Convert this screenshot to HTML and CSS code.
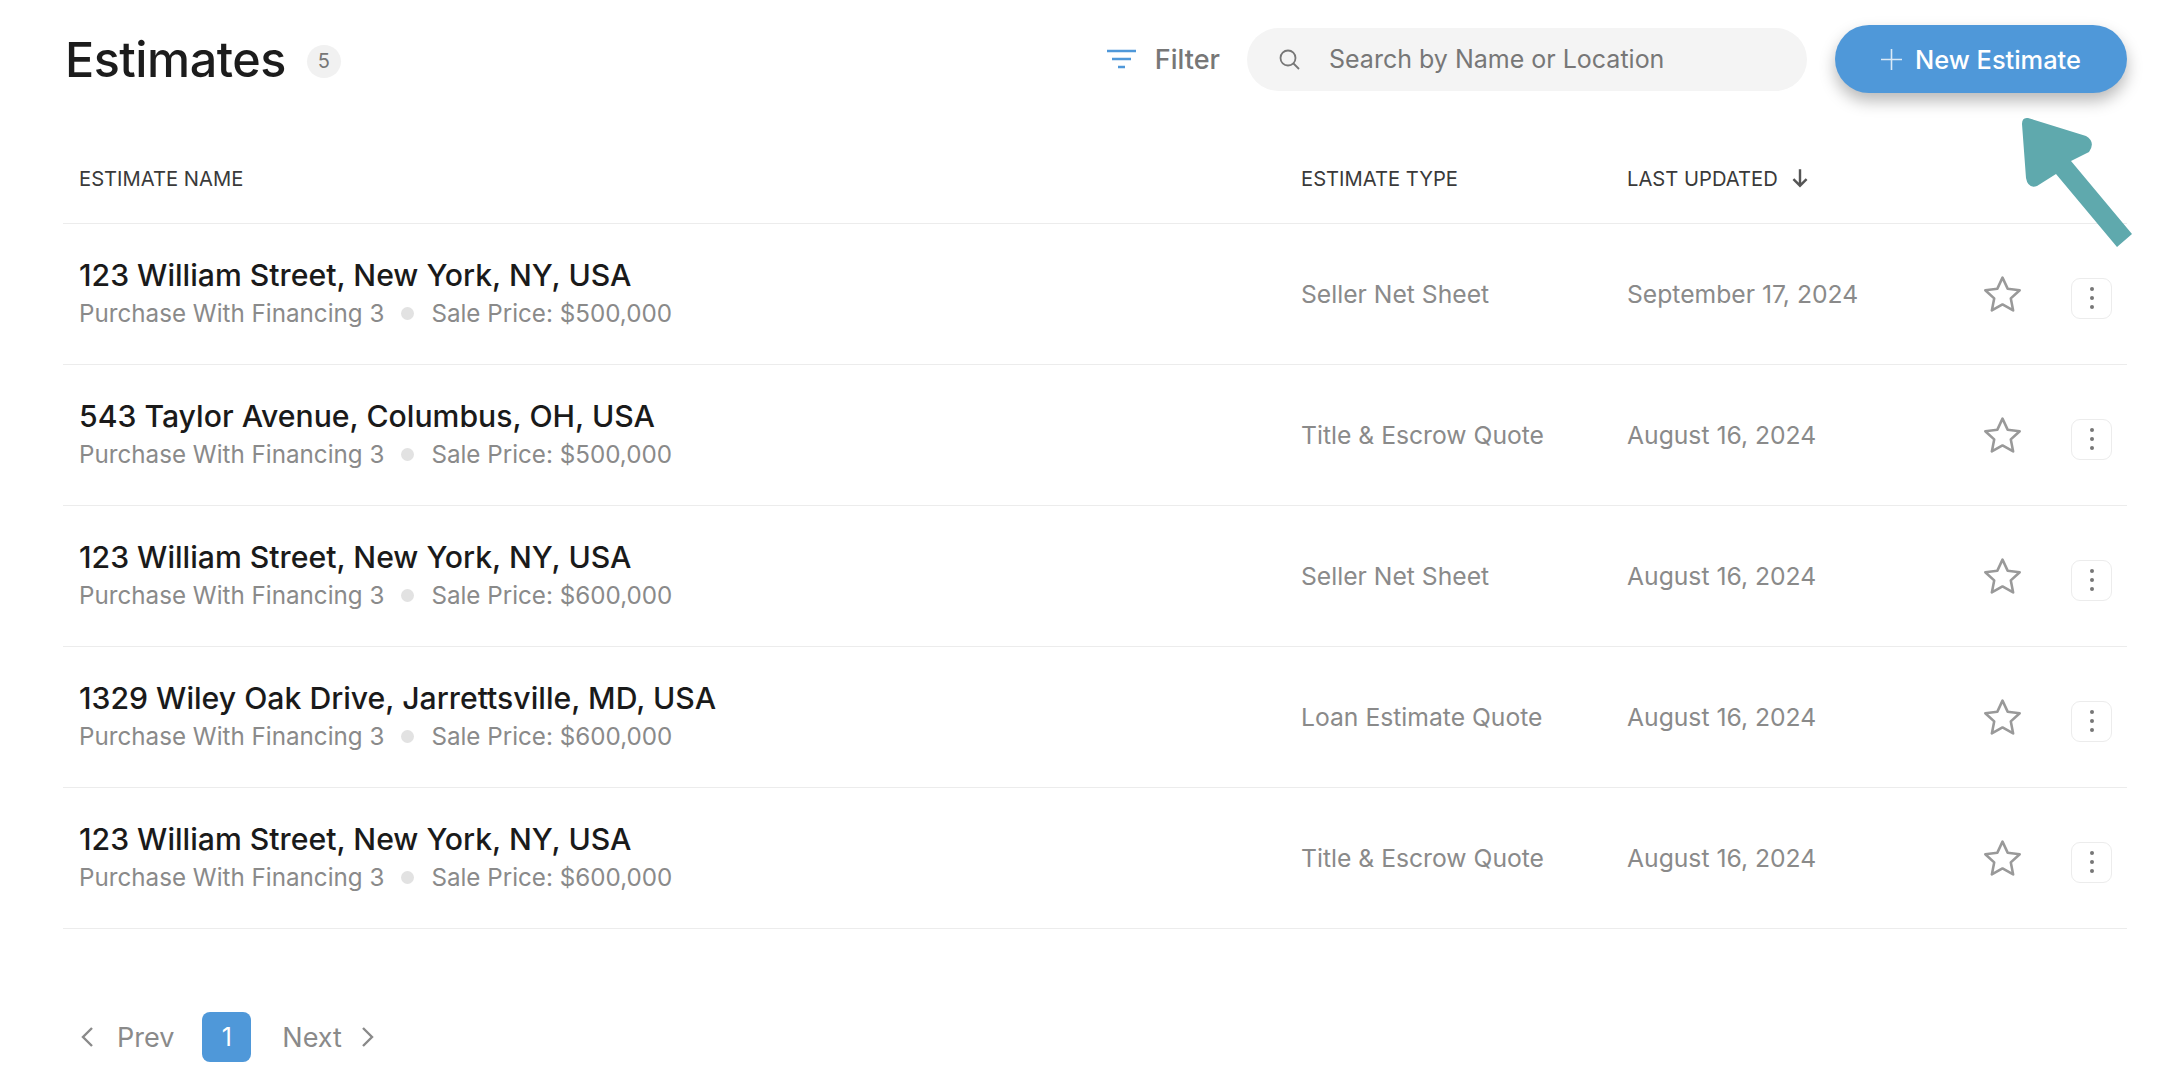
FILE: index.html
```html
<!DOCTYPE html>
<html>
<head>
	<meta charset="utf-8">
	<title>Estimates</title>
	<link rel="stylesheet" href="styles.css">
</head>
<body>
	<div class="page">
		<header class="toolbar">
			<h1 class="title">Estimates</h1>
			<span class="count">5</span>
			<button class="filter">
				<svg class="filter-icon" viewBox="0 0 31 20"><path d="M1 2h29M6 10h19M12 18h7"/></svg>
				Filter
			</button>
			<label class="search">
				<svg class="search-icon" viewBox="0 0 24 24"><circle cx="11" cy="11" r="7.5"/><path d="M16.5 16.5L22 22"/></svg>
				<input class="search-input" type="text" placeholder="Search by Name or Location">
			</label>
			<button class="new-btn"><svg class="plus" viewBox="0 0 21 21"><path d="M10.500 0v21M0 10.500h21"/></svg>New Estimate</button>
		</header>

		<div class="row head">
			<div>ESTIMATE NAME</div>
			<div>ESTIMATE TYPE</div>
			<div class="sorted">LAST UPDATED
				<svg class="sort-icon" viewBox="0 0 20 20"><path d="M10 2v15M4 11l6 6 6-6"/></svg>
			</div>
		</div>

		<div class="row">
			<div>
				<div class="name">123 William Street, New York, NY, USA</div>
				<div class="sub">Purchase With Financing 3<i class="dot"></i>Sale Price: $500,000</div>
			</div>
			<div class="cell">Seller Net Sheet</div>
			<div class="cell">September 17, 2024</div>
			<svg class="star" viewBox="0 0 40 40"><path d="M20 3.5l5 10.8 11.8 1.5-8.7 8 2.3 11.7L20 29.7 9.600 35.500l2.300-11.700-8.700-8L15 14.300z"/></svg>
			<button class="more"><i></i><i></i><i></i></button>
		</div>
		<div class="row">
			<div>
				<div class="name">543 Taylor Avenue, Columbus, OH, USA</div>
				<div class="sub">Purchase With Financing 3<i class="dot"></i>Sale Price: $500,000</div>
			</div>
			<div class="cell">Title &amp; Escrow Quote</div>
			<div class="cell">August 16, 2024</div>
			<svg class="star" viewBox="0 0 40 40"><path d="M20 3.5l5 10.8 11.8 1.5-8.7 8 2.3 11.7L20 29.7 9.600 35.500l2.300-11.700-8.700-8L15 14.300z"/></svg>
			<button class="more"><i></i><i></i><i></i></button>
		</div>
		<div class="row">
			<div>
				<div class="name">123 William Street, New York, NY, USA</div>
				<div class="sub">Purchase With Financing 3<i class="dot"></i>Sale Price: $600,000</div>
			</div>
			<div class="cell">Seller Net Sheet</div>
			<div class="cell">August 16, 2024</div>
			<svg class="star" viewBox="0 0 40 40"><path d="M20 3.5l5 10.8 11.8 1.5-8.7 8 2.3 11.7L20 29.7 9.600 35.500l2.300-11.700-8.700-8L15 14.300z"/></svg>
			<button class="more"><i></i><i></i><i></i></button>
		</div>
		<div class="row">
			<div>
				<div class="name">1329 Wiley Oak Drive, Jarrettsville, MD, USA</div>
				<div class="sub">Purchase With Financing 3<i class="dot"></i>Sale Price: $600,000</div>
			</div>
			<div class="cell">Loan Estimate Quote</div>
			<div class="cell">August 16, 2024</div>
			<svg class="star" viewBox="0 0 40 40"><path d="M20 3.5l5 10.8 11.8 1.5-8.7 8 2.3 11.7L20 29.7 9.600 35.500l2.300-11.700-8.700-8L15 14.300z"/></svg>
			<button class="more"><i></i><i></i><i></i></button>
		</div>
		<div class="row">
			<div>
				<div class="name">123 William Street, New York, NY, USA</div>
				<div class="sub">Purchase With Financing 3<i class="dot"></i>Sale Price: $600,000</div>
			</div>
			<div class="cell">Title &amp; Escrow Quote</div>
			<div class="cell">August 16, 2024</div>
			<svg class="star" viewBox="0 0 40 40"><path d="M20 3.5l5 10.8 11.8 1.5-8.7 8 2.3 11.7L20 29.7 9.600 35.500l2.300-11.700-8.700-8L15 14.300z"/></svg>
			<button class="more"><i></i><i></i><i></i></button>
		</div>

		<nav class="pager">
			<svg class="chev" viewBox="0 0 14 22"><path d="M12 2L3 11l9 9"/></svg>
			<span class="prev">Prev</span>
			<span class="current">1</span>
			<span class="next">Next</span>
			<svg class="chev" viewBox="0 0 14 22"><path d="M2 2l9 9-9 9"/></svg>
		</nav>
	</div>

	<!-- annotation arrow over the page -->
	<svg class="arrow" viewBox="0 0 130 150"><path d="M8 2L66 20Q76 26 69 36L51 45 112 118 97 131 36 58 17 70Q8 73 6 62L2 8Q2 1 8 2Z"/></svg>
</body>
</html>
```

FILE: styles.css
```css
body{
	margin: 0;
	background-color: #fff;
	font-family: "Inter", "Liberation Sans", sans-serif;
	color: #1c1c1c;
}
.page{
	padding: 25px 39px 0 63px;
}
button{
	font-family: inherit;
	border: 0;
	background: none;
	padding: 0;
}

/* top bar */
.toolbar{
	display: flex;
	align-items: center;
	height: 68px;
}
.title{
	margin: 0 0 0 2px;
	font-size: 48.500px;
	font-weight: 500;
	letter-spacing: -0.5px;
}
.count{
	margin-left: 21px;
	margin-top: 4px;
	width: 34px;
	height: 33px;
	line-height: 33px;
	text-align: center;
	border-radius: 50%;
	background-color: #f1f1f1;
	color: #777;
	font-size: 20px;
}
.filter{
	display: flex;
	align-items: center;
	gap: 18px;
	margin-left: auto;
	color: #777;
	font-size: 27px;
	font-weight: 500;
}
.filter-icon{
	width: 31px;
	height: 20px;
	fill: none;
	stroke: #4f98d9;
	stroke-width: 2.500;
}
.search{
	display: flex;
	align-items: center;
	width: 560px;
	height: 63px;
	margin-left: 27px;
	margin-right: 28px;
	padding-left: 30px;
	box-sizing: border-box;
	border-radius: 32px;
	background-color: #f4f4f4;
}
.search-icon{
	width: 24px;
	height: 24px;
	fill: none;
	stroke: #777;
	stroke-width: 1.8;
}
.search-input{
	flex: 1;
	margin-left: 28px;
	border: 0;
	outline: 0;
	background: none;
	font-family: inherit;
	font-size: 25px;
	padding: 0;
}
.search-input::placeholder{
	color: #777;
	opacity: 1;
}
.new-btn{
	display: flex;
	align-items: center;
	justify-content: center;
	width: 292px;
	height: 68px;
	border-radius: 34px;
	background-color: #4f98d9;
	color: #fff;
	font-size: 25.400px;
	font-weight: 500;
	box-shadow: 0 8px 16px rgba(0,0,0,.28);
}
.plus{
	width: 21px;
	height: 21px;
	margin-right: 13px;
	fill: none;
	stroke: #fff;
	stroke-width: 1.6;
	opacity: .8;
}

/* table rows */
.row{
	display: grid;
	grid-template-columns: 1222px 326px 353px 91px 41px;
	align-items: center;
	height: 141px;
	box-sizing: border-box;
	padding: 0 15px 0 16px;
	border-bottom: 1px solid #ececec;
}
.head{
	height: 131px;
	padding-top: 40px;
	font-size: 20.200px;
	color: #3a3a3a;
}
.sorted{
	display: flex;
	align-items: center;
	gap: 11px;
	white-space: nowrap;
}
.sort-icon{
	width: 22px;
	height: 22px;
	fill: none;
	stroke: #555;
	stroke-width: 2.200;
}
.name{
	font-size: 30.200px;
	line-height: 38px;
	font-weight: 500;
	color: #1a1a1a;
}
.sub{
	display: flex;
	align-items: center;
	margin-top: 1px;
	font-size: 24.200px;
	line-height: 38px;
	color: #8a8a8a;
}
.dot{
	width: 13px;
	height: 13px;
	margin: 0 17px;
	border-radius: 50%;
	background-color: #e2e2e2;
}
.cell{
	font-size: 24.700px;
	color: #8a8a8a;
}
.star{
	width: 41px;
	height: 41px;
	margin-left: 2px;
	fill: none;
	stroke: #999;
	stroke-width: 2.500;
	stroke-linejoin: round;
}
.more{
	display: flex;
	flex-direction: column;
	align-items: center;
	justify-content: center;
	gap: 5px;
	width: 41px;
	height: 41px;
	margin-top: 8px;
	box-sizing: border-box;
	border: 1px solid #ececec;
	border-radius: 9px;
}
.more i{
	width: 4px;
	height: 4px;
	border-radius: 50%;
	background-color: #777;
}

/* pager */
.pager{
	display: flex;
	align-items: center;
	margin-top: 83px;
	margin-left: 17px;
	color: #8a8a8a;
	font-size: 27px;
}
.chev{
	width: 14px;
	height: 22px;
	fill: none;
	stroke: #8a8a8a;
	stroke-width: 2.400;
}
.prev{
	margin-left: 23px;
}
.current{
	width: 49px;
	height: 50px;
	line-height: 50px;
	margin-left: 28px;
	text-align: center;
	border-radius: 8px;
	background-color: #4f98d9;
	color: #fff;
	font-size: 25px;
}
.next{
	margin-left: 31px;
	margin-right: 19px;
}

.arrow{
	position: absolute;
	left: 2020px;
	top: 116px;
	width: 130px;
	height: 150px;
	fill: #5fa9ad;
}
```
